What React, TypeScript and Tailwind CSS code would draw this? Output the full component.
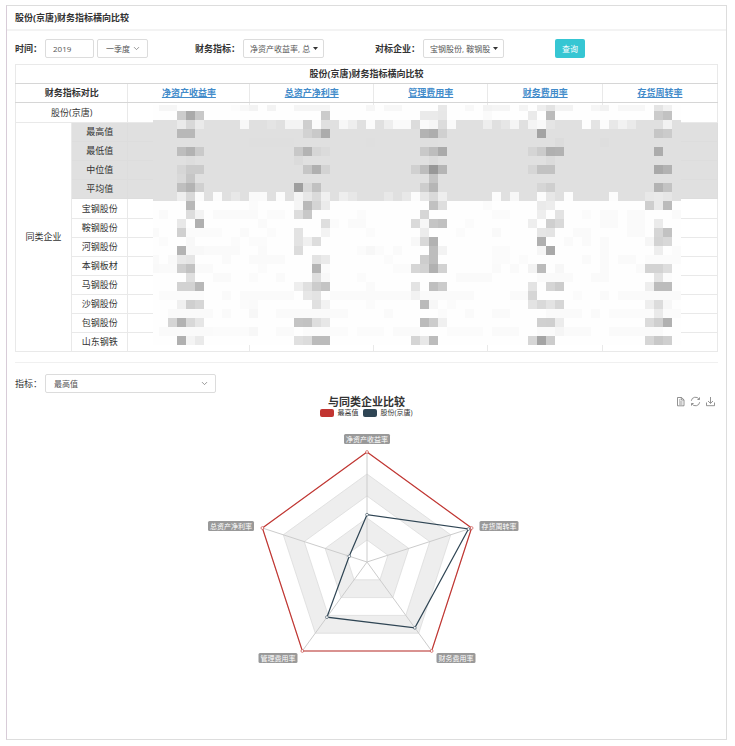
import { ChevronDown } from 'lucide-react'

const metrics = ['净资产收益率', '总资产净利率', '管理费用率', '财务费用率', '存货周转率']
const summaryRows = ['最高值', '最低值', '中位值', '平均值']
const companies = ['宝钢股份', '鞍钢股份', '河钢股份', '本钢板材', '马钢股份', '沙钢股份', '包钢股份', '山东钢铁']

// Privacy mosaic over the figures. Each row lists "column:grey" blocks, grey in hex;
// "a-b:grey" fills a run of columns.
const mosaicRows = [
  '0-1:f6 8:fc 9:f8 10:f3 12:f3 15-18:f5 23:f6 25-26:f7 31:e8 34:f8 36:f3 37-38:f5 40:f4 42:ee 43:e3 44-45:f3 48:f6 49:f2 51-53:f7 55:e4 56:f1',
  '2:cc 3:aa 4:c8 18:cb 29-30:ea 31:e7 36:fa 41:ea 43:bb 55:cb 56:c2',
  '2:ea 3:d8 4:ea 9:f8 12:e4 14-15:f4 16:ce 17:fb 20:f7 21:ee 23:fb 25:ee 26-27:fa 28:dc 29:fa 30:f6 31:dc 32:fa 36:ee 38:e6 39:f5 41:f4 42:f9 43:e5 47:fd 48:e4 49:fc 50:e8 51:f2 52:ea 56:f2',
  '2-3:b8 16:d2 17:c9 18:ac 29:b3 30:ad 31:d0 42:a3 55:c6 56:cb',
  '10-14:df 23:df 29-30:df 44:dc 49:de',
  '2:bd 3:b2 4:ca 15:c8 16:b3 17:d6 18:db 29:c9 30:bd 31:aa 41:d5 42:cb 43:b0 44:b2 55:ac',
  '3:dd 15:db 30:db 43:db',
  '2:d6 3-4:cb 16:c6 17:b0 18:d3 28:d0 29:bd 30:98 31:b5 41:d6 42-43:c2 55:a9 56:b2',
  '2:d9 3:c6 30:c4',
  '2:bf 3:b3 4:d0 15:9f 16:d8 17:c1 29:cd 30:b6 42:d6 43:cf 55:b3 56:c3',
  '2:ee 3:d8 4:fb 6:fc 8:e8 10-11:fa 13:fc 15:f4 16:e7 17:da 18:f0 20:ee 21:e7 25:e8 27:e8 28:fc 29:e7 30:da 31:ee 37:fc 39:f7 42:fc 43:e7 45:fd 50:fc 54:e8 55:ea 56:e6',
  '3:b8 10:fb 15:f5 16:b9 17:d4 18:eb 30:c1 31:de 36:fb 42:ea 43:ed 54:ce 55:ea 56:bb',
  '0:fa 3:dd 4:f3 6-9:fa 10:fa 12-13:fb 15:dd 16:c8 22:fb 29:d6 37-38:fb 42:ee 44:e3 47:fb 49-50:fa 52-53:fa 57:fa',
  '2:e8 4:b0 11:fa 18:de 19:fb 21-22:fa 28:da 29:f7 30:c5 31:c0 34:fb 41:ee 43:cf 44:d9 49-50:fa 52-53:fa 55:eb',
  '-1:fa 2:d0 3-6:fb 9:fa 12:fb 15:e3 18:f3 23:fb 29:ec 33:fb 37:f9 42:e6 43:e4 46-47:fa 52-53:fa 55:d6 56:c2',
  '0:fb 3:f8 8:fb 10-11:fb 15:e3 16:f0 17:dd 28:f8 29:d9 30:b2 42:b0 45:fa 47:fa 49:fa 54:f6 55:d3 56:d8',
  '2:b3 3-4:f8 5-8:fa 11:fa 15:dc 22:fb 23:f7 24:fb 26:fa 30:bd 31:f3 37-38:fb 42:f6 43:a9 49:fa 55:ee 57:fb',
  '-1:fa 1:f9 2:e8 3:e5 7:fa 10-13:fa 17:e3 18:ea 25:fb 29:cd 30:bd 37-38:fb 40:fb 47:fa 49:fa 51-52:fa 54-57:fb',
  '-1:f9 0-1:fa 2:ce 3:c2 4-5:fa 11:fb 17:b4 18:fb 26-27:fb 28:d6 29:d2 30:b1 31:d2 37:fa 39:fa 41:f3 42:bb 44:f7 49:fa 53:fa 54-55:d3 56:dd',
  '3:df 6-7:fa 10:fb 13:fa 17:de 18:f8 22:fb 33-36:fa 42-45:fa 48-49:fa 55:e3 56:fb',
  '2-3:d2 4:b8 15:ee 16:e0 17:cc 18:c4 23:fa 28:e3 30:bf 31:cb 41:e3 43:d5 44:cc 54:ee 55-56:bc',
  '0-4:fb 7:fa 9-14:fa 16:e7 17:e3 19-27:fa 28:f2 29-34:fa 39-40:fa 41:d6 46:fb 49:fa 51-57:fa',
  '2:f0 3:cf 4:d6 9:fb 10:fa 17:e0 18:f2 23:fb 29:ba 30:f7 32:fb 41:e3 42:d9 43:e3 44:d6 54:ee 55:dc 56:f7',
  '1-5:fa 7:fa 10:f7 13-20:fa 25:fa 31:fb 34:fa 37-38:fa 43-46:fa 48:fa 50-54:fb 55:ea 56-57:fb',
  '1:d5 2:b2 3:d8 4:e6 15:c4 16:c2 17:de 18:e7 29:bb 30:cc 31:f0 42:d0 43:cf 44:ec 54:db 55:cf 56:b1',
  '0-5:fa 6-9:fb 10:f7 13-14:fa 16-20:fb 22-24:fb 26-28:fa 32-35:fb 37-39:fa 42-43:fa 44:f5 45-47:fa 50-55:fa',
  '2:b0 3:f4 4:ea 15:e0 16:dc 17-18:bb 28:d5 29:e8 30:bc 41:d6 42:a4 43:cc 54:d6 55:c8 56:cf',
]

const blocks = mosaicRows.flatMap((row, r) =>
  row.split(' ').map((item) => {
    const [, start, end, grey] = item.match(/^(-?\d+)(?:-(\d+))?:(\w\w)$/)!
    const from = Number(start)
    const to = end ? Number(end) : from
    return {
      x: Math.max(0, from * 9 + 6),
      y: r === 0 ? 0 : r * 9 - 3,
      width: from < 0 ? 6 : (to - from + 1) * 9,
      height: r === 0 ? 6 : 9,
      fill: `#${grey}${grey}${grey}`,
    }
  }),
)

function Mosaic() {
  return (
    <svg
      className="absolute top-[41px] left-[19.6%] h-[240px] w-[75.1%]"
      viewBox="0 0 528 240"
      preserveAspectRatio="none"
      shapeRendering="crispEdges"
      aria-hidden="true"
    >
      <rect width="528" height="240" fill="#fefefe" />
      <rect y="15" width="528" height="81" fill="#e0e0e0" />
      {blocks.map((b, i) => (
        <rect key={i} {...b} />
      ))}
    </svg>
  )
}

function ComparisonTable() {
  const cell = 'h-[19px] border border-[#e9e9e9] p-0 text-center'
  const tallCell = 'h-[20px] border border-[#e9e9e9] p-0 text-center'
  return (
    <div className="relative">
      <table className="w-full table-fixed border-collapse text-[9px] leading-[14px]">
        <colgroup>
          <col className="w-[8%]" />
          <col className="w-[8%]" />
          <col className="w-[17.4%]" />
          <col className="w-[17.6%]" />
          <col className="w-[16.3%]" />
          <col className="w-[16.3%]" />
          <col className="w-[16.4%]" />
        </colgroup>
        <thead>
          <tr>
            <th colSpan={7} className={`${cell} border-b-[#d6d6d6]`}>股份(京唐)财务指标横向比较</th>
          </tr>
          <tr>
            <th colSpan={2} className={`${cell} border-b-[#d6d6d6]`}>财务指标对比</th>
            {metrics.map((m) => (
              <th key={m} className={`${cell} border-b-[#d6d6d6]`}>
                <a href="#radar" className="text-[#428bca] underline">{m}</a>
              </th>
            ))}
          </tr>
        </thead>
        <tbody>
          <tr>
            <th colSpan={2} className={`${tallCell} font-normal`}>股份(京唐)</th>
            {metrics.map((m) => <td key={m} className={tallCell} />)}
          </tr>
          {summaryRows.map((name, i) => (
            <tr key={name}>
              {i === 0 && (
                <th rowSpan={12} className={`${cell} font-normal`}>同类企业</th>
              )}
              <th className="h-[19px] border border-[#dddddd] bg-[#e0e0e0] p-0 text-center font-normal">{name}</th>
              {metrics.map((m) => (
                <td key={m} className="h-[19px] border border-[#dddddd] bg-[#e0e0e0] p-0" />
              ))}
            </tr>
          ))}
          {companies.map((name, i) => (
            <tr key={name}>
              <th className={`${i === 0 ? tallCell : cell} font-normal`}>{name}</th>
              {metrics.map((m) => <td key={m} className={i === 0 ? tallCell : cell} />)}
            </tr>
          ))}
        </tbody>
      </table>
      <Mosaic />
    </div>
  )
}

const directions = [0, 1, 2, 3, 4].map((i) => {
  const angle = (-90 - 72 * i) * (Math.PI / 180)
  return [Math.cos(angle), Math.sin(angle)]
})
const radius = 110

function ring(values: number[]) {
  return directions.map(([x, y], i) => [x * radius * values[i], y * radius * values[i]])
}

const toPoints = (pts: number[][]) => pts.map((p) => p.join(',')).join(' ')

const series = [
  { color: '#c23531', values: [1, 1, 1, 1, 1] },
  { color: '#2f4554', values: [0.43, 0.17, 0.62, 0.74, 0.97] },
]

const axisLabels = [
  { text: metrics[0], x: 0, y: -123, w: 46 },
  { text: metrics[1], x: -136, y: -36, w: 46 },
  { text: metrics[2], x: -89, y: 96, w: 39 },
  { text: metrics[3], x: 89, y: 96, w: 39 },
  { text: metrics[4], x: 132, y: -36, w: 39 },
]

function Radar() {
  return (
    <svg className="mx-auto block h-[240px] w-[330px]" viewBox="-165 -132 330 240" role="img" aria-label="与同类企业比较">
      {[1, 0.8, 0.6, 0.4, 0.2].map((k, i) => (
        <polygon
          key={k}
          points={toPoints(ring([k, k, k, k, k]))}
          fill={i % 2 ? '#eeeeee' : '#ffffff'}
          stroke="#dcdcdc"
          strokeWidth="0.8"
        />
      ))}
      {directions.map(([x, y], i) => (
        <line key={i} x1="0" y1="0" x2={x * radius} y2={y * radius} stroke="#cccccc" />
      ))}
      {series.map((s) => (
        <g key={s.color} stroke={s.color}>
          <polygon points={toPoints(ring(s.values))} fill="none" strokeWidth="1.2" />
          {ring(s.values).map(([x, y], i) => (
            <circle key={i} cx={x} cy={y} r="1.4" fill="#ffffff" strokeWidth="0.6" />
          ))}
        </g>
      ))}
      {axisLabels.map((l) => (
        <g key={l.text}>
          <rect x={l.x - l.w / 2} y={l.y - 5} width={l.w} height="10" rx="1.5" fill="#999999" />
          <text x={l.x} y={l.y + 3} textAnchor="middle" fill="#ffffff" className="text-[7px]">{l.text}</text>
        </g>
      ))}
    </svg>
  )
}

const box = 'h-[19px] rounded-[2px] border border-[#dcdcdc] bg-white text-[8px] text-[#555555]'

function Caret() {
  return (
    <svg className="pointer-events-none absolute top-[8px] right-[6px] h-[3px] w-[5px]" viewBox="0 0 5 3" aria-hidden="true">
      <path d="M0 0h5L2.5 3z" fill="#333333" />
    </svg>
  )
}

export default function App() {
  return (
    <div className="flex min-h-screen flex-col bg-white pt-[5px] pr-[8px] pb-[6px] pl-[6px] font-['Open_Sans','Noto_Sans_CJK_SC',sans-serif] text-[9px] leading-[14px] text-[#333333]">
      <main className="flex-1 border border-[#dddddd] border-l-[#d8ccd8]">
        <header className="flex h-[25px] items-center border-b-2 border-[#f3f3f3] px-[8px]">
          <h1 className="font-bold">股份(京唐)财务指标横向比较</h1>
        </header>
        <div className="px-[8px]">
          <form className="flex items-center pt-[8px] pb-[6px]" onSubmit={(e) => e.preventDefault()}>
            <div className="mr-[47px] flex items-center gap-[3px]">
              <label htmlFor="year" className="font-bold">时间：</label>
              <input id="year" defaultValue="2019" className={`${box} w-[49px] px-[7px]`} />
              <div className="relative">
                <select aria-label="季度" className={`${box} w-[51px] appearance-none pl-[8px]`}>
                  <option>一季度</option>
                </select>
                <ChevronDown className="pointer-events-none absolute top-[5px] right-[7px] size-[9px] text-[#777777]" strokeWidth={2} />
              </div>
            </div>
            <div className="mr-[51px] flex items-center gap-[3px]">
              <label htmlFor="metric" className="font-bold">财务指标：</label>
              <div className="relative">
                <select id="metric" className={`${box} w-[81px] appearance-none pl-[6px]`}>
                  <option>净资产收益率, 总</option>
                </select>
                <Caret />
              </div>
            </div>
            <div className="mr-[51px] flex items-center gap-[3px]">
              <label htmlFor="peers" className="font-bold">对标企业：</label>
              <div className="relative">
                <select id="peers" className={`${box} w-[81px] appearance-none pl-[6px]`}>
                  <option>宝钢股份, 鞍钢股</option>
                </select>
                <Caret />
              </div>
            </div>
            <button type="submit" className="h-[19px] w-[30px] rounded-[2px] bg-[#36c6d3] text-[8px] text-white">查询</button>
          </form>
          <ComparisonTable />
          <hr className="mt-[10px] border-[#f0f0f0]" />
          <div className="mt-[11px] flex items-center gap-[3px]">
            <label htmlFor="indicator">指标：</label>
            <div className="relative">
              <select id="indicator" className={`${box} w-[171px] appearance-none pl-[8px]`}>
                <option>最高值</option>
              </select>
              <ChevronDown className="pointer-events-none absolute top-[5px] right-[7px] size-[9px] text-[#777777]" strokeWidth={2} />
            </div>
          </div>
          <section id="radar" className="relative pt-[2px]">
            <h2 className="text-center text-[11px] leading-[14px] font-bold">与同类企业比较</h2>
            <div className="flex h-[8px] items-center justify-center gap-[5px] text-[7px] leading-[8px]">
              <span className="flex items-center gap-[3px]"><i className="h-[8px] w-[14px] rounded-[2px] bg-[#c23531]" />最高值</span>
              <span className="flex items-center gap-[3px]"><i className="h-[8px] w-[14px] rounded-[2px] bg-[#2f4554]" />股份(京唐)</span>
            </div>
            <div className="absolute top-[3px] right-[2px] flex gap-[4px] text-[#777777]">
              <button type="button" aria-label="数据视图">
                <svg className="size-[11px]" viewBox="0 0 11 11" fill="none" stroke="currentColor" strokeWidth="0.8">
                  <path d="M2.5 1.5h4l2.5 2.3v6h-6.5zM6.3 1.5v2.5h2.5M4 4h1.5M4 6h3.5M4 8h3.5" />
                </svg>
              </button>
              <button type="button" aria-label="还原">
                <svg className="size-[11px]" viewBox="0 0 11 11" fill="none" stroke="currentColor" strokeWidth="0.8">
                  <path d="M1.3 4.8a4.2 4.2 0 0 1 7.8-1.5M9.7 6.2a4.2 4.2 0 0 1-7.8 1.5M9.5 1.4v2.1h-2.1M1.5 9.6V7.5h2.1" />
                </svg>
              </button>
              <button type="button" aria-label="保存为图片">
                <svg className="size-[11px]" viewBox="0 0 11 11" fill="none" stroke="currentColor" strokeWidth="0.8">
                  <path d="M5.5 1v6.2M3 5l2.5 2.4L8 5M1.5 6.5v3.2h8V6.5" />
                </svg>
              </button>
            </div>
            <div className="pt-[13px]">
              <Radar />
            </div>
          </section>
        </div>
      </main>
    </div>
  )
}
